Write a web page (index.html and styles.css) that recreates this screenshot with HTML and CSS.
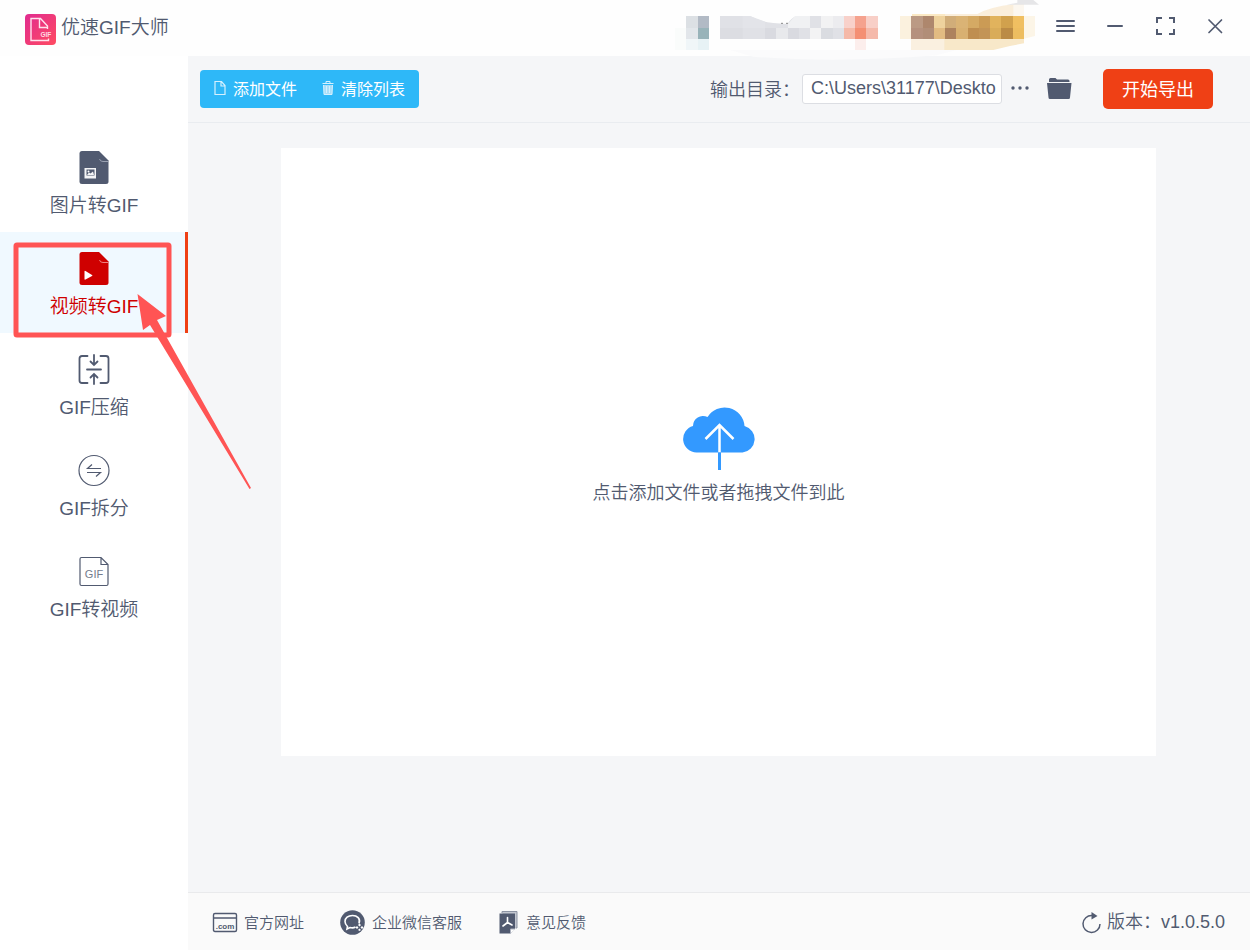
FILE: index.html
```
<!DOCTYPE html>
<html lang="zh-CN">
<head>
  <meta charset="UTF-8" />
  <meta name="viewport" content="width=device-width, initial-scale=1.0" />
  <title>优速GIF大师</title>
  <link rel="stylesheet" href="styles.css">
</head>
<body>
  <header class="titlebar">
    <svg class="logo" viewBox="0 0 31 31" width="31" height="31" aria-hidden="true">
      <defs>
        <linearGradient id="logoBg" x1="0" y1="0" x2="1" y2="1">
          <stop offset="0" stop-color="#e02b90" />
          <stop offset="1" stop-color="#ff4b61" />
        </linearGradient>
      </defs>
      <rect width="31" height="31" rx="4" fill="url(#logoBg)" />
      <path d="M22.500 15V12L15.500 4.500H6V26.500H23.500V24.500M14.500 5V13.500H22.500" fill="none" stroke="#ffe3ee" stroke-width="1.400" />
      <text x="15.500" y="22.500" font-size="6.500" font-weight="bold" fill="#ffd9e4">GIF</text>
    </svg>
    <h1 class="app-name">优速GIF大师</h1>

    <svg class="account" viewBox="0 0 1140 180" width="380" height="60" aria-hidden="true">
      <path d="M180 150H860L800 166Q500 190 250 170Z" fill="#fbfbfc" />
      <path d="M15 84H48V150H15Z" fill="#fafcfb" />
      <path d="M48 48h36v36h-36z" fill="#dce0e4" /><path d="M84 48h33v36h-33z" fill="#b2bac5" />
      <path d="M48 84h36v33h-36z" fill="#e2e6ea" /><path d="M84 84h33v33h-33z" fill="#98b3b9" />
      <path d="M48 117h36v33h-36z" fill="#f0f6f8" /><path d="M84 117h33v33h-33z" fill="#e7f2f5" />
      <path d="M150 48H240Q270 65 310 69L352 72Q365 52 380 48H522V117H150Z" fill="#e0e1e6" />
      <path d="M150 84h68v33h-68z" fill="#dcdde2" />
      <path d="M218 48H240L285 65V84H218Z" fill="#e3e4e9" />
      <path d="M285 84h33v33h-33z" fill="#d9dae0" /><path d="M318 84h36v33h-36z" fill="#e8e9ec" />
      <path d="M354 84h33v33h-33z" fill="#d9dae0" />
      <path d="M354 72L375 48H420V84H354Z" fill="#f0f1f3" />
      <path d="M453 48h36v36h-36z" fill="#f2f2f3" /><path d="M489 48h33v36h-33z" fill="#ececef" />
      <path d="M420 84h33v33h-33z" fill="#f3f3f4" /><path d="M453 84h36v33h-36z" fill="#dadce1" />
      <path d="M522 48h33v36h-33z" fill="#f8d1ca" /><path d="M555 48h33v36h-33z" fill="#f5a28e" /><path d="M588 48h36v36h-36z" fill="#f8cfc7" />
      <path d="M522 84h33v33h-33z" fill="#f5b9a8" /><path d="M555 84h33v33h-33z" fill="#f48f73" /><path d="M588 84h36v33h-36z" fill="#f5b9aa" />
      <path d="M555 117h33v33h-33z" fill="#fceeec" />
      <path d="M333 70h6M348 70h6" stroke="#888" stroke-width="3" />
      <path d="M690 48h33v69h-33z" fill="#fbf1de" /><path d="M726 42H825V48H726Z" fill="#fbe9c4" />
      <path d="M723 117H1062V130L1020 138L970 150H723Z" fill="#f8e8c9" />
      <path d="M723 117h100v33h-100z" fill="#faf0e0" />
      <path d="M825 42H922Q960 21 1030 13H1062V50H825Z" fill="#faeedb" />
      <path d="M1030 15h32v33h-32z" fill="#fcf7ef" /><path d="M1062 48h33v60l-33 8z" fill="#fcf5e7" />
      <path d="M723 48h36v36h-36z" fill="#bb9a84" /><path d="M759 48h33v36h-33z" fill="#ae876d" />
      <path d="M792 48h33v36h-33z" fill="#eed29e" /><path d="M825 48h33v36h-33z" fill="#d1ad79" />
      <path d="M858 48h36v36h-36z" fill="#dab375" /><path d="M894 48h33v36h-33z" fill="#d5aa64" />
      <path d="M927 48h33v36h-33z" fill="#cb9b55" /><path d="M960 48h33v36h-33z" fill="#e1b35d" />
      <path d="M993 48h36v36h-36z" fill="#d1a14d" /><path d="M1029 48h33v36h-33z" fill="#f0bf61" />
      <path d="M723 84h36v33h-36z" fill="#b5917e" /><path d="M759 84h33v33h-33z" fill="#b18e78" />
      <path d="M792 84h33v33h-33z" fill="#e2bb82" /><path d="M825 84h33v33h-33z" fill="#ad825e" />
      <path d="M858 84h36v33h-36z" fill="#d8b071" /><path d="M894 84h33v33h-33z" fill="#bf8e50" />
      <path d="M927 84h33v33h-33z" fill="#c39456" /><path d="M960 84h33v33h-33z" fill="#d9ac59" />
      <path d="M993 84h36v33h-36z" fill="#bb8b45" /><path d="M1029 84h33v33h-33z" fill="#edbd60" />
      <path d="M1010 14L1042 8V0H1090L1107 14Z" fill="#e6e6e8" />
    </svg>

    <div class="window-controls">
      <button class="window-btn" aria-label="菜单">
        <svg viewBox="0 0 22 22" width="22" height="22"><path d="M3 6H20M3 11H20M3 16H20" stroke-width="2" stroke-linecap="round" /></svg>
      </button>
      <button class="window-btn" aria-label="最小化">
        <svg viewBox="0 0 22 22" width="22" height="22"><path d="M4 11H18" stroke-width="2" stroke-linecap="round" /></svg>
      </button>
      <button class="window-btn" aria-label="最大化">
        <svg viewBox="0 0 22 22" width="22" height="22"><path d="M8 3H3V8M15 3H20V8M3 14V19H8M20 14V19H15" stroke-width="2" /></svg>
      </button>
      <button class="window-btn" aria-label="关闭">
        <svg viewBox="0 0 22 22" width="22" height="22"><path d="M5 5L17.500 17.500M17.500 5L5 17.500" stroke-width="1.700" stroke-linecap="round" /></svg>
      </button>
    </div>
  </header>

  <div class="layout">
    <nav class="sidebar">
      <button class="nav-item">
        <svg class="nav-icon" viewBox="0 0 34 34" width="34" height="34">
          <path d="M5 0H22L31.500 9.500V30.500Q31.500 33 29 33H5Q2.500 33 2.500 30.500V2.500Q2.500 0 5 0Z" fill="#515a70" />
          <path d="M22.500 8Q23 10.500 26 10.500H31" fill="none" stroke="#9aa1b1" />
          <rect x="7.500" y="17" width="11.500" height="10.500" fill="#f4f4f6" />
          <path d="M9.500 18.500H17.500V24.500H9.500Z" fill="#515a70" />
          <path d="M10 24L12 21.500L13.500 22.500L16 20.500L17 24Z" fill="#f4f4f6" /><circle cx="11.500" cy="20.500" r="1" fill="#fff" />
        </svg>
        <span>图片转GIF</span>
      </button>
      <button class="nav-item active">
        <svg class="nav-icon" viewBox="0 0 34 34" width="34" height="34">
          <path d="M5 0H22L31.500 9.500V30.500Q31.500 33 29 33H5Q2.500 33 2.500 30.500V2.500Q2.500 0 5 0Z" fill="#cf0000" />
          <path d="M22.500 8Q23 10.500 26 10.500H31" fill="none" stroke="#ef8080" />
          <path d="M7.500 19.500V27Q7.500 28 8.500 27.500L15 24Q16 23.500 15 23L8.500 19Q7.500 18.500 7.500 19.500Z" fill="#fff" />
        </svg>
        <span>视频转GIF</span>
      </button>
      <button class="nav-item">
        <svg class="nav-icon" viewBox="0 0 34 34" width="34" height="34" fill="none" stroke="#515a70" stroke-width="1.800" stroke-linecap="round">
          <path d="M10.500 3H5Q2.500 3 2.500 5.500V27.500Q2.500 30 5 30H10.500M23.500 3H29Q31.500 3 31.500 5.500V27.500Q31.500 30 29 30H23.500M10 16.500H24" />
          <path d="M17 2V12M13.500 8.500L17 12L20.500 8.500M17 31V21M13.500 24.500L17 21L20.500 24.500" />
        </svg>
        <span>GIF压缩</span>
      </button>
      <button class="nav-item">
        <svg class="nav-icon" viewBox="0 0 34 34" width="34" height="34" fill="none" stroke="#515a70" stroke-width="1.200">
          <circle cx="17" cy="16.500" r="15" />
          <path d="M24 14.500H10.500L15 10.500M10 18.500H23.500L19 22.500" />
        </svg>
        <span>GIF拆分</span>
      </button>
      <button class="nav-item">
        <svg class="nav-icon" viewBox="0 0 34 34" width="34" height="34">
          <path d="M24 2.500H4.500Q3 2.500 3 4V29Q3 30.500 4.500 30.500H29.500Q31 30.500 31 29V9.500ZM24 2.500V9.500H31" fill="none" stroke="#515a70" stroke-width="1.200" />
          <text x="17" y="23" font-size="11" text-anchor="middle" fill="#737b8d">GIF</text>
        </svg>
        <span>GIF转视频</span>
      </button>
    </nav>

    <main class="content">
      <div class="toolbar">
        <div class="file-actions">
          <button class="file-btn">
            <svg viewBox="0 0 14 16" width="14" height="16"><path d="M2 1.500H8.500L12 5.500V14.500H2ZM8 1.500V6H12" fill="none" stroke="#d5f0fe" stroke-width="1.200" /></svg>
            添加文件
          </button>
          <button class="file-btn">
            <svg viewBox="0 0 14 16" width="14" height="16">
              <path d="M2.500 5H11.500L11 15H3Z" fill="#a9def9" />
              <path d="M1.500 3.500H12.500M5 3V1.500H9V3M2.500 5L3 14.500H11L11.500 5M5.500 6V13M8.500 6V13" fill="none" stroke="#d5f0fe" />
            </svg>
            清除列表
          </button>
        </div>
        <div class="output">
          <label for="outputPath">输出目录：</label>
          <input class="path-input" id="outputPath" type="text" value="C:\Users\31177\Deskto">
          <button class="icon-btn" aria-label="选择目录">
            <svg viewBox="0 0 20 20" width="20" height="20"><circle cx="3" cy="9" r="1.700" /><circle cx="10" cy="9" r="1.700" /><circle cx="17" cy="9" r="1.700" /></svg>
          </button>
          <button class="icon-btn folder-btn" aria-label="打开目录">
            <svg viewBox="0 0 26 22" width="26" height="22"><path d="M3 3V1.500Q3 0 4.500 0H9.500L11 1.500H22Q23.500 1.500 23.500 3V4H3ZM1 5H25.500L24 19.500Q24 21 22.500 21H4Q2.500 21 2.500 19.500Z" /></svg>
          </button>
          <button class="export-btn">开始导出</button>
        </div>
      </div>

      <div class="workspace">
        <button class="dropzone">
          <svg viewBox="0 0 74 64" width="74" height="64" aria-hidden="true">
            <path d="M14.500 45.500A13.500 13.500 0 0 1 11 19A10 10 0 0 1 25.500 10A20 20 0 0 1 62.500 19A13.500 13.500 0 0 1 60.500 45.500Z" fill="#3399ff" />
            <path d="M37.500 45.500V63" stroke="#3399ff" stroke-width="3" />
            <path d="M37.500 45V18M23.500 32L37.500 18L51.500 32" fill="none" stroke="#fff" stroke-width="2.500" />
          </svg>
          <span>点击添加文件或者拖拽文件到此</span>
        </button>
      </div>

      <footer class="statusbar">
        <a class="status-link" href="#">
          <svg viewBox="0 0 26 26" width="26" height="26">
            <path d="M3 4.500H23Q24.500 4.500 24.500 6V21Q24.500 22.500 23 22.500H3Q1.500 22.500 1.500 21V6Q1.500 4.500 3 4.500ZM1.500 9H24.500" fill="none" stroke="#515a70" stroke-width="1.400" />
            <text x="13" y="20" font-size="8" font-weight="bold" text-anchor="middle" fill="#515a70">.com</text>
          </svg>
          官方网址
        </a>
        <a class="status-link" href="#">
          <svg viewBox="0 0 26 26" width="26" height="26">
            <circle cx="12.500" cy="13.500" r="12.300" fill="#515a70" />
            <path d="M19 14.500C21 9.500 17 6.500 12.500 6.500C8 6.500 5 9 5 12.500C5 15 6.500 16.500 7.500 17.500L7 20L10 18.500Q13 19.500 15.500 18" fill="none" stroke="#fff" stroke-width="1.600" />
            <path d="M19.500 14.500L21 16L19.500 17.500L18 16ZM22 17L23.500 18.500L22 20L20.500 18.500ZM19.500 19.500L21 21L19.500 22L18 21ZM17 17L18.500 18.500L17 20L15.500 18.500Z" fill="#fff" />
          </svg>
          企业微信客服
        </a>
        <a class="status-link" href="#">
          <svg viewBox="0 0 22 26" width="22" height="26">
            <path d="M4 4V2.500H19V19H17.500" fill="#c3c7d0" stroke="#8c93a3" />
            <path d="M1.500 4.500H17V19.500L12.500 24.500H1.500Z" fill="#515a70" />
            <path d="M12.500 24.500V20H17" fill="#fff" stroke="#aeb3bf" />
            <path d="M9.500 8.500V13.500L5 17M9.500 13.500L14 16" fill="none" stroke="#fff" stroke-width="1.600" stroke-linecap="round" />
          </svg>
          意见反馈
        </a>
        <div class="version">
          <svg viewBox="0 0 22 24" width="22" height="24" aria-hidden="true">
            <path d="M12 5.500A8.500 8.500 0 1 0 20 14" fill="none" stroke="#515a70" stroke-width="1.500" />
            <path d="M11.500 2L17.500 6L11.500 9.500Z" fill="#515a70" />
          </svg>
          <span>版本：v1.0.5.0</span>
        </div>
      </footer>
    </main>
  </div>

  <!-- step marker: frame round the active tool and a pointer to it -->
  <svg class="guide" viewBox="0 0 260 500" width="260" height="500" aria-hidden="true">
    <rect x="16" y="245" width="153" height="90" rx="1" fill="none" stroke="#ff5454" stroke-width="5" stroke-linejoin="round" />
    <path d="M137.500 294L166 316L157 320L251 488L249.500 489L150 325L143 330Z" fill="#ff5454" />
  </svg>
</body>
</html>
```
FILE: styles.css
```
* {
  box-sizing: border-box;
}

body {
  margin: 0;
  min-height: 100vh;
  display: flex;
  flex-direction: column;
  position: relative;
  background: #fff;
  color: #515a70;
  font-family: "Liberation Sans", "Noto Sans CJK SC", sans-serif;
  font-size: 18px;
  font-weight: 350;
}

button,
input {
  font: inherit;
  color: inherit;
}

button {
  padding: 0;
  border: none;
  background: none;
  cursor: pointer;
}

svg {
  display: block;
  flex: none;
}

.titlebar {
  height: 56px;
  display: flex;
  align-items: center;
  padding: 2px 24px 0 25px;
  background: #fefefe;
}

.app-name {
  margin: 0 auto 0 5px;
  font-size: 19px;
  font-weight: 350;
  line-height: 24px;
  padding-bottom: 2px;
}

.account {
  align-self: flex-start;
  margin-top: -2px;
  overflow: visible;
  position: relative;
}

.window-controls {
  display: flex;
  gap: 28px;
  margin-left: 4px;
  padding-bottom: 6px;
}

.window-btn svg {
  fill: none;
  stroke: #515a70;
}

.layout {
  flex: 1;
  display: flex;
}

.sidebar {
  width: 188px;
  flex: none;
  display: flex;
  flex-direction: column;
  padding-top: 75px;
}

.nav-item {
  height: 101px;
  display: flex;
  flex-direction: column;
  align-items: center;
  gap: 9px;
  padding-top: 20px;
  font-size: 19px;
  line-height: 24px;
}

.nav-item.active {
  background: #f0f9ff;
  color: #cf0000;
  box-shadow: inset -3px 0 #ef4015;
}

.content {
  flex: 1;
  min-width: 0;
  display: flex;
  flex-direction: column;
  background: #f5f6f8;
}

.toolbar {
  height: 67px;
  display: flex;
  align-items: center;
  justify-content: space-between;
  padding: 0 37px 0 12px;
  border-bottom: 1px solid #e9ecf0;
}

.file-actions {
  height: 38px;
  display: flex;
  gap: 24px;
  padding: 0 14px 2px 13px;
  border-radius: 4px;
  background: #2eb8f8;
}

.file-btn {
  display: flex;
  align-items: center;
  gap: 6px;
  color: #fff;
  font-size: 16px;
  font-weight: 400;
}

.output {
  display: flex;
  align-items: center;
}

.output label {
  margin-right: 2px;
  padding-bottom: 3px;
}

.path-input {
  width: 200px;
  height: 30px;
  margin-right: 8px;
  padding: 0 0 2px 8px;
  border: 1px solid #dcdee3;
  border-radius: 3px;
  background: #fff;
}

.icon-btn svg {
  fill: #515a70;
}

.folder-btn {
  margin: 0 31px 0 16px;
}

.export-btn {
  width: 110px;
  height: 40px;
  padding-bottom: 2px;
  border-radius: 5px;
  background: #ef4015;
  color: #fff;
  font-weight: 400;
}

.workspace {
  flex: 1;
  display: flex;
  padding: 25px 94px 136px 93px;
}

.dropzone {
  flex: 1;
  display: flex;
  flex-direction: column;
  align-items: center;
  justify-content: center;
  gap: 7px;
  padding-top: 7px;
  background: #fff;
}

.statusbar {
  height: 58px;
  display: flex;
  align-items: center;
  gap: 36px;
  padding: 0 25px 0 24px;
  border-top: 1px solid #e9eaec;
  background: #fafafa;
}

.status-link {
  display: flex;
  align-items: center;
  gap: 6px;
  color: inherit;
  font-size: 15px;
  text-decoration: none;
}

.version {
  display: flex;
  align-items: center;
  gap: 5px;
  margin-left: auto;
}

.version span {
  padding-bottom: 4px;
}

.guide {
  position: absolute;
  top: 0;
  left: 0;
  pointer-events: none;
}
```
